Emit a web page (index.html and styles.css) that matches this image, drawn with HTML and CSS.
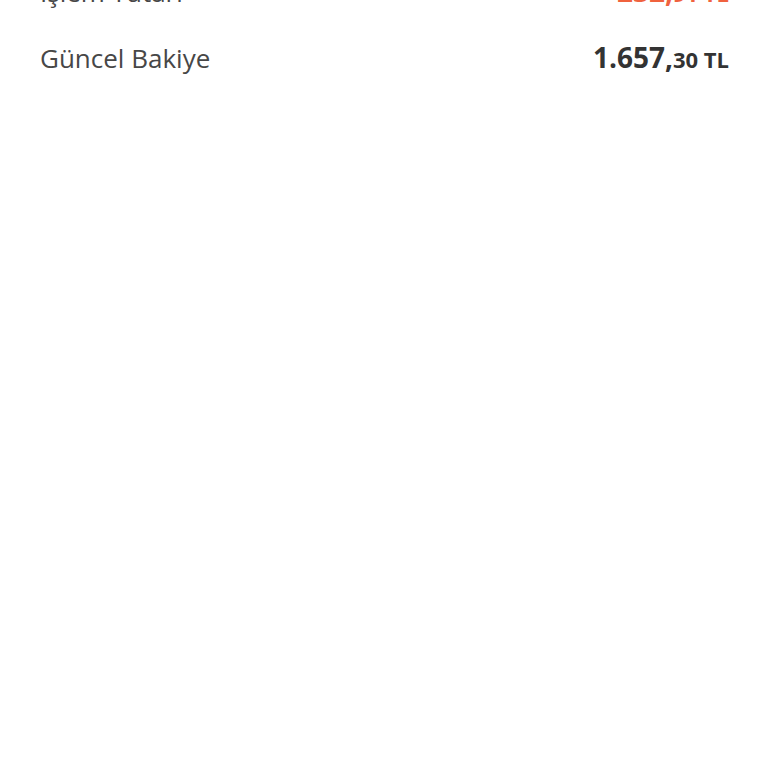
FILE: index.html
```html
<!DOCTYPE html>
<html lang="tr">
<head>
    <meta charset="UTF-8">
    <meta name="viewport" content="width=device-width, initial-scale=1.0">
    <title>İşlem Özeti</title>
    <link rel="stylesheet" href="styles.css">
</head>
<body>

    <div class="summary">
        <div class="summary-row">
            <span class="summary-label">İşlem Tutarı</span>
            <span class="summary-amount negative">232,<small>91 TL</small></span>
        </div>
        <div class="summary-row">
            <span class="summary-label">Güncel Bakiye</span>
            <span class="summary-amount">1.657,<small>30 TL</small></span>
        </div>
    </div>

</body>
</html>
```

FILE: styles.css
```css
body {
    font-family: 'Open Sans', 'Noto Sans', sans-serif;
    background: #ffffff;
    margin: 0;
    padding: 0;
    color: #3f3f3f;
}


.summary {
    margin-top: -42px;
    padding: 0 39px 0 40px;
}

.summary-row {
    display: flex;
    justify-content: space-between;
    align-items: baseline;
    height: 66px;
    line-height: 66px;
}

.summary-label {
    font-size: 26px;
    color: #474747;
}

.summary-amount {
    font-size: 28px;
    font-weight: 700;
    color: #333333;
}

.summary-amount small {
    font-size: 22px;
}

.summary-amount.negative {
    color: #f0623e;
}
```
